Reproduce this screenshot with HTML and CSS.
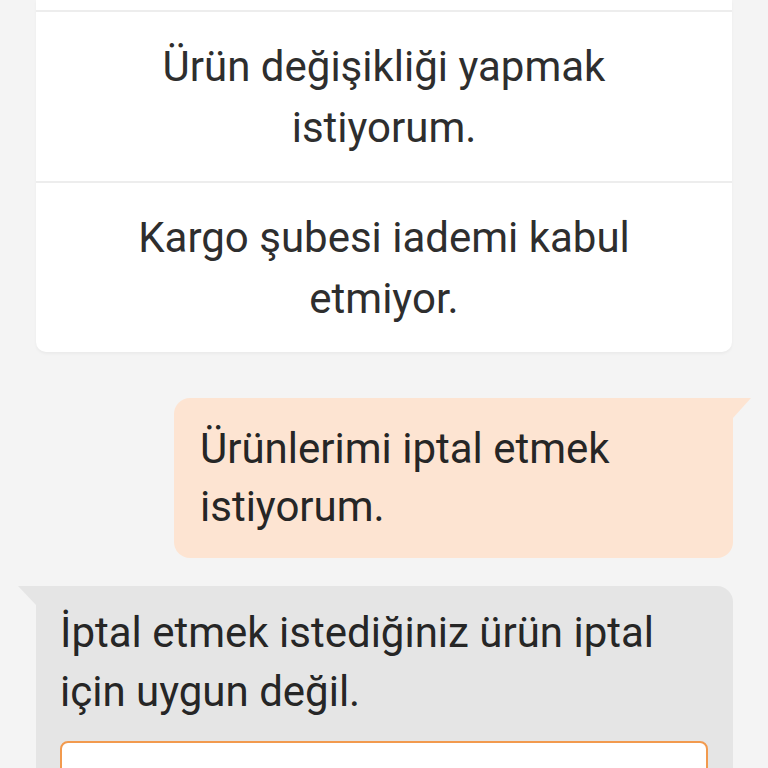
FILE: index.html
```html
<!DOCTYPE html>
<html lang="tr">
<head>
<meta charset="utf-8">
<link rel="stylesheet" href="styles.css">
</head>
<body>
<div class="chat">
  <div class="options">
    <div class="option option-cut"></div>
    <div class="option">Ürün değişikliği yapmak istiyorum.</div>
    <div class="option">Kargo şubesi iademi kabul etmiyor.</div>
  </div>
  <div class="row row-user">
    <div class="bubble bubble-user">Ürünlerimi iptal etmek istiyorum.</div>
  </div>
  <div class="row row-bot">
    <div class="bubble bubble-bot">
      <div class="bot-text">İptal etmek istediğiniz ürün iptal için uygun değil.</div>
      <div class="order-box"></div>
    </div>
  </div>
</div>
</body>
</html>
```
FILE: styles.css
```css
html, body {
  margin: 0;
  padding: 0;
  background: #f4f4f4;
  font-family: Roboto, "Noto Sans", "Liberation Sans", sans-serif;
  overflow: hidden;
  height: 768px;
}
.chat {
  display: flex;
  flex-direction: column;
}
.options {
  margin: 0 36px;
  background: #fff;
  border-radius: 0 0 10px 10px;
  box-shadow: 0 2px 3px rgba(0,0,0,0.04);
  display: flex;
  flex-direction: column;
}
.option {
  text-align: center;
  font-size: 42px;
  line-height: 61px;
  color: #2e2e2e;
  padding: 24px 40px 23px;
  border-top: 2px solid #ededed;
}
.option-cut {
  padding: 0;
  height: 10px;
  border-top: none;
}
.row {
  display: flex;
}
.row-user {
  margin-top: 46px;
  justify-content: flex-end;
  padding-right: 35px;
}
.bubble {
  position: relative;
  font-size: 42px;
  color: #262626;
}
.bubble-user {
  width: 559px;
  box-sizing: border-box;
  background: #fde4d2;
  border-radius: 16px 0 16px 16px;
  padding: 22px 26px 22px 26px;
  line-height: 58px;
}
.bubble-user::after {
  content: "";
  position: absolute;
  top: 0;
  right: -18px;
  border-top: 20px solid #fde4d2;
  border-right: 18px solid transparent;
}
.row-bot {
  margin-top: 28px;
  padding-left: 36px;
  padding-right: 35px;
}
.bubble-bot {
  flex: 1;
  background: #e5e5e5;
  border-radius: 0 16px 16px 16px;
  padding: 17px 25px 0 24px;
  line-height: 59px;
  height: 200px;
}
.bubble-bot::before {
  content: "";
  position: absolute;
  top: 0;
  left: -18px;
  border-top: 19px solid #e5e5e5;
  border-left: 18px solid transparent;
}
.order-box {
  margin-top: 20px;
  height: 80px;
  background: #fff;
  border: 2px solid #f29a4e;
  border-radius: 8px;
}
```
